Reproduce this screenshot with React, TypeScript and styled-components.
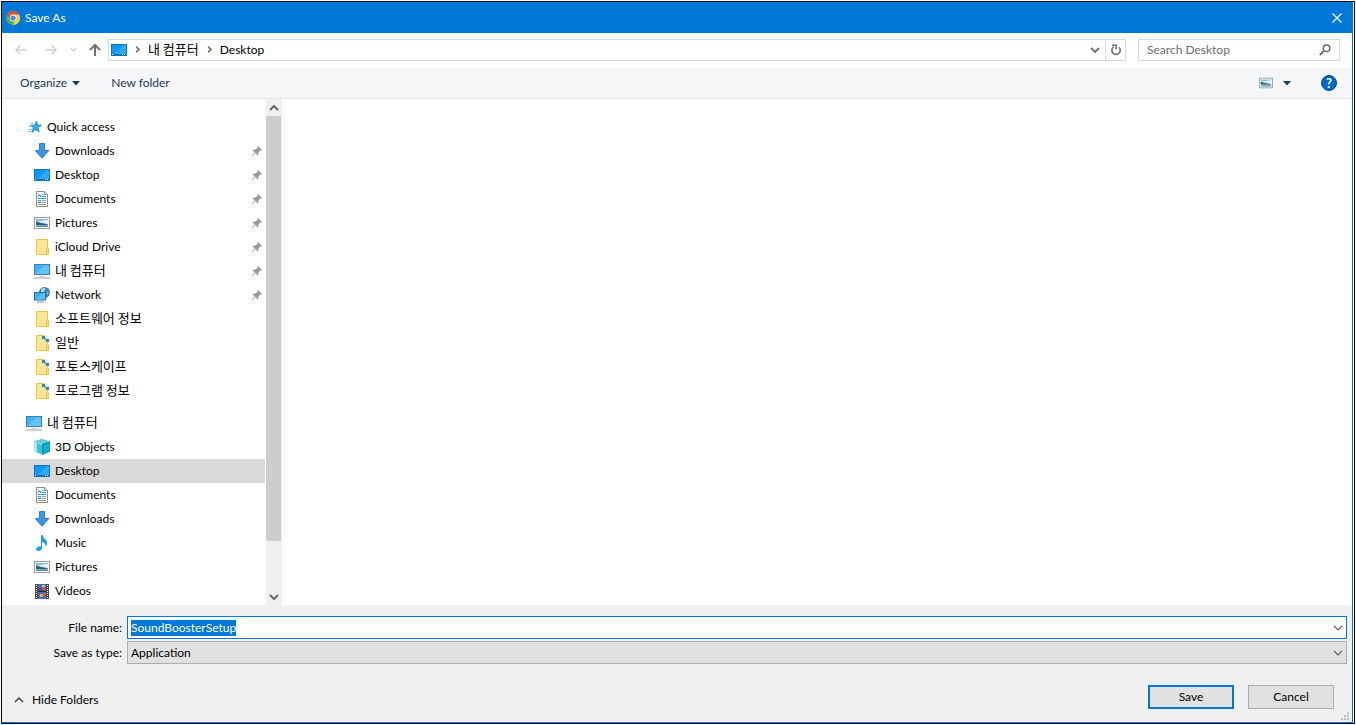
import React, { useEffect, useRef } from 'react';
import styled, { createGlobalStyle } from 'styled-components';

const GlobalStyle = createGlobalStyle`
  * { box-sizing: border-box; }
  body {
    margin: 0;
    background: #fff;
    color: #000;
    font: 12px/16px Lato, "Noto Sans CJK KR", sans-serif;
  }
  button, input, select { font: inherit; color: inherit; margin: 0; }
  svg { display: block; flex: none; }
`;

/* ---------- window ---------- */

const Page = styled.div`
  height: 100vh;
  min-height: 480px;
  padding: 1px;
  display: flex;
`;

const Frame = styled.div`
  flex: 1;
  min-width: 0;
  display: flex;
  border: 1px solid #000;
  padding-right: 1px;
`;

const Dialog = styled.main`
  flex: 1;
  min-width: 0;
  display: flex;
  flex-direction: column;
  border: solid #0078d7;
  border-width: 0 1px 1px 0;
`;

const TitleBar = styled.header`
  height: 31px;
  flex: none;
  display: flex;
  align-items: center;
  gap: 5px;
  padding: 0 10px 0 4px;
  background: #0078d7;
  color: #fff;
`;

const Title = styled.h1`
  flex: 1;
  margin: 0;
  font-size: 12px;
  font-weight: 400;
`;

const PlainButton = styled.button`
  display: flex;
  align-items: center;
  justify-content: center;
  padding: 0;
  border: 0;
  background: transparent;
`;

/* ---------- address row ---------- */

const AddressRow = styled.div`
  height: 35px;
  flex: none;
  display: flex;
  align-items: center;
  padding: 0 12px 2px;
`;

const History = styled.div`
  flex: none;
  display: grid;
  grid-template-columns: 30px 26px 18px 14px;
  justify-items: start;
  align-items: center;
  margin-right: 6px;
`;

const AddressBox = styled.div`
  flex: 1;
  min-width: 0;
  height: 22px;
  display: flex;
  align-items: center;
  border: 1px solid #d9d9d9;
  padding-left: 2px;
`;

const Crumbs = styled.nav`
  flex: 1;
  display: flex;
  align-items: center;
  gap: 7px;
`;

const Crumb = styled(PlainButton)<{ $hangul?: boolean }>`
  padding-bottom: ${p => (p.$hangul ? 2 : 0)}px;
  font-size: ${p => (p.$hangul ? 13 : 12)}px;
  font-family: ${p => (p.$hangul ? '"Noto Sans CJK KR", sans-serif' : 'inherit')};
`;

const AddressButton = styled(PlainButton)<{ $divided?: boolean }>`
  width: 20px;
  height: 20px;
  border-left: ${p => (p.$divided ? '1px solid #d9d9d9' : '0')};
`;

const SearchBox = styled.div`
  width: 202px;
  height: 22px;
  flex: none;
  display: flex;
  align-items: center;
  margin-left: 12px;
  border: 1px solid #d9d9d9;
  padding: 0 8px;
`;

const SearchInput = styled.input`
  flex: 1;
  min-width: 0;
  padding: 0;
  border: 0;
  outline: 0;
  background: transparent;
  &::placeholder { color: #6d6d6d; opacity: 1; }
`;

/* ---------- command bar ---------- */

const CommandBar = styled.div`
  height: 31px;
  flex: none;
  display: flex;
  align-items: center;
  padding: 0 15px 0 18px;
  background: #f5f6f7;
  border-bottom: 1px solid #e8e9eb;
`;

const Command = styled(PlainButton)`
  gap: 5px;
  margin-right: 31px;
  color: #1e395b;
`;

const ViewTools = styled.div`
  flex: 1;
  display: flex;
  align-items: center;
  justify-content: flex-end;
  gap: 10px;
`;

const HelpButton = styled(PlainButton)`
  margin-left: 20px;
`;

/* ---------- body ---------- */

const Body = styled.div`
  flex: 1;
  min-height: 0;
  display: flex;
`;

const Tree = styled.nav`
  width: 263px;
  flex: none;
  overflow: hidden;
  padding: 16px 0 2px;
`;

const List = styled.ul`
  list-style: none;
  margin: 0;
  padding: 0;
  & + & { margin-top: 8px; }
`;

const Row = styled.li<{ $root?: boolean; $selected?: boolean }>`
  height: 24px;
  display: flex;
  align-items: center;
  gap: 5px;
  padding: 0 3px 0 ${p => (p.$root ? 24 : 32)}px;
  background: ${p => (p.$selected ? '#d9d9d9' : 'transparent')};
`;

const RowLabel = styled.a<{ $hangul?: boolean }>`
  flex: 1;
  padding-bottom: ${p => (p.$hangul ? 2 : 0)}px;
  color: #000;
  text-decoration: none;
  white-space: nowrap;
  font-size: ${p => (p.$hangul ? 13 : 12)}px;
  font-family: ${p => (p.$hangul ? '"Noto Sans CJK KR", sans-serif' : 'inherit')};
`;

const ScrollBar = styled.div`
  width: 16px;
  flex: none;
  margin-left: 1px;
  display: flex;
  flex-direction: column;
  background: #f0f0f0;
`;

const ScrollButton = styled(PlainButton)`
  width: 15px;
  height: 17px;
  flex: none;
`;

const ScrollTrack = styled.div`
  flex: 1;
  min-height: 0;
`;

const ScrollThumb = styled.div`
  width: 15px;
  height: 90%;
  background: #cdcdcd;
`;

const FileArea = styled.section`
  flex: 1;
  margin-left: 2px;
  border-left: 1px solid #f5f5f5;
`;

/* ---------- footer ---------- */

const Footer = styled.form`
  flex: none;
  background: #f0f0f0;
  padding: 11px 5px 0 0;
`;

const Field = styled.div`
  display: flex;
  align-items: center;
  gap: 5px;
  margin-bottom: 2px;
`;

const FieldLabel = styled.label`
  width: 120px;
  flex: none;
  text-align: right;
`;

const Combo = styled.div<{ $active?: boolean }>`
  flex: 1;
  height: 23px;
  display: grid;
  grid-template-columns: 1fr 17px;
  align-items: center;
  border: 1px solid ${p => (p.$active ? '#0078d7' : '#adadad')};
  background: ${p => (p.$active ? '#fff' : '#e1e1e1')};
`;

const NameInput = styled.input`
  min-width: 0;
  height: 16px;
  padding: 0 3px;
  border: 0;
  outline: 0;
  background: transparent;
  &::selection { background: #0078d7; color: #fff; }
`;

const TypeSelect = styled.select`
  grid-area: 1 / 1 / 2 / 3;
  height: 21px;
  padding: 0 3px;
  border: 0;
  outline: 0;
  appearance: none;
  background: transparent;
`;

const SelectMark = styled.span`
  grid-area: 1 / 2 / 2 / 3;
  display: flex;
  justify-content: center;
  pointer-events: none;
`;

const Actions = styled.div`
  display: flex;
  align-items: center;
  gap: 14px;
  padding: 19px 13px 0 12px;
`;

const HideFolders = styled(PlainButton)`
  gap: 8px;
  margin-right: auto;
  padding-top: 6px;
`;

const DialogButton = styled.button<{ $primary?: boolean }>`
  width: 86px;
  height: 24px;
  padding: 0;
  background: #e1e1e1;
  border: ${p => (p.$primary ? '2px solid #0078d7' : '1px solid #adadad')};
`;

const GripRow = styled.div`
  height: 13px;
  display: flex;
  justify-content: flex-end;
  align-items: flex-start;
  padding-top: 3px;
  margin-right: -2px;
`;

/* ---------- icons ---------- */

type ChevronProps = { dir: 'up' | 'down' | 'right'; size?: number; color?: string; weight?: number };

const Chevron = ({ dir, size = 10, color = '#606060', weight = 1.5 }: ChevronProps) => {
  const d = { up: 'M1 7 5 3l4 4', down: 'M1 3l4 4 4-4', right: 'M3 1l4 4-4 4' }[dir];
  return (
    <svg width={size} height={size} viewBox="0 0 10 10" fill="none" stroke={color} strokeWidth={weight} aria-hidden="true">
      <path d={d} />
    </svg>
  );
};

const Caret = () => (
  <svg width="8" height="5" viewBox="0 0 8 5" aria-hidden="true"><path d="M0 0h8L4 4.5z" fill="#1e395b" /></svg>
);

const Arrow = ({ dir }: { dir: 'left' | 'right' | 'up' }) => {
  const d = {
    left: 'M13 7H2M6.500 2.500 2 7l4.500 4.500',
    right: 'M1 7h11M7.500 2.500 12 7l-4.500 4.500',
    up: 'M7 13V2M2 7l5-5 5 5',
  }[dir];
  const up = dir === 'up';
  return (
    <svg width="14" height="14" viewBox="0 0 14 14" fill="none" stroke={up ? '#707070' : '#d4d4d4'} strokeWidth={up ? 2 : 1.5} aria-hidden="true">
      <path d={d} />
    </svg>
  );
};

const Icon16 = ({ children }: { children: React.ReactNode }) => (
  <svg width="16" height="16" viewBox="0 0 16 16" aria-hidden="true">{children}</svg>
);

const ChromeIcon = () => (
  <svg width="14" height="14" viewBox="0 0 14 14" aria-hidden="true">
    <circle cx="7" cy="7" r="7" fill="#4caf50" />
    <path d="M7 7 .9 3.600A7 7 0 0 1 13.100 3.600z" fill="#dd4b3e" />
    <path d="M.94 3.500 4.200 8.600 7 7 7 3.600z" fill="#dd4b3e" />
    <path d="M7 3.600h6.100A7 7 0 0 1 6.600 14L9.900 8.600z" fill="#ffcd42" />
    <circle cx="7" cy="7" r="3.400" fill="#f3f3f3" />
    <circle cx="7" cy="7" r="2.600" fill="#4587f3" />
  </svg>
);

const DesktopIcon = () => (
  <Icon16>
    <rect x=".5" y="2.500" width="15" height="11" fill="#0f98fb" stroke="#0a78c0" />
    <path d="M3 12 13 3h2v9z" fill="#2ba8ff" />
    <path d="M1 12.500h14" stroke="#0c6fb8" />
    <path d="M1 12.500h1M11 12.500h1M13 12.500h1" stroke="#fff" />
  </Icon16>
);

const StarIcon = () => (
  <Icon16>
    <path d="m10.500 2 1 4 4 .2-3.300 2.300.9 4.500-3.400-2.400-3.900 2.900 1.600-4.700-2.600-2.300 3.700-.2z" fill="#35aaf0" stroke="#1a7fc4" strokeWidth=".8" />
    <path d="M4.500 4.500h3M3 7.500h2M3 10.500h3M2 12.500h3" stroke="#6cbdec" />
  </Icon16>
);

const DownloadIcon = () => (
  <Icon16>
    <path d="M5.500.5h5v7h4.300L8 15.200 1.200 7.500h4.300z" fill="#3b97e6" stroke="#2f80cc" />
  </Icon16>
);

const DocumentIcon = () => (
  <Icon16>
    <path d="M2.500.5h8l3 3v12h-11z" fill="#fff" stroke="#8c8c8c" />
    <path d="M10.500.5v3h3" fill="#e8e8e8" stroke="#8c8c8c" />
    <path d="m4 6 1.500-3L7 6" fill="none" stroke="#1c8ede" />
    <path d="M8 3.500h1.500M8 5.500h4M4 7.500h8M4 9.500h3" stroke="#2f9be6" />
    <path d="M8 9.500h4M8 11.500h4M4 13.500h8" stroke="#9b9b9b" />
    <path d="M4 11.500h3" stroke="#1c6fb4" />
  </Icon16>
);

const PictureIcon = ({ small }: { small?: boolean }) => (
  <svg width={small ? 14 : 16} height={small ? 12 : 16} viewBox={small ? '0 2 16 12' : '0 0 16 16'} aria-hidden="true">
    <rect x=".5" y="2.500" width="15" height="11" fill="#fff" stroke="#9a9a9a" />
    <path d="M2 4h12v2H2z" fill="#7dbcf0" />
    <path d="M2 6h12v3H2z" fill="#cfe8fa" />
    <path d="M9 5h5v3L9 7z" fill="#e8f5fd" />
    <path d="M2 6.500c2 0 3 1 5 1.500s4 .6 7 1.500v.5H2z" fill="#35605c" />
    <path d="M2 10h12v1H2z" fill="#7aa9cf" />
    <path d="M2 11h12v1H2z" fill="#4b88bd" />
  </svg>
);

const FolderIcon = ({ shared }: { shared?: boolean }) => (
  <Icon16>
    <path d="M2.500.5h11v9h1v6h-12z" fill="#ffe694" stroke="#e9c34f" />
    <path d="M12.500 15V10.500q0-1 1-1" fill="none" stroke="#e0b63c" />
    {shared && (
      <>
        <path d="M10 0h4v4h-2z" fill="#eef4f8" />
        <path d="M8 1h3v3H8zM12 4h3v3h-3z" fill="#2f84c9" />
        <path d="M10 3h2v2h-2z" fill="#5ba4dc" />
      </>
    )}
  </Icon16>
);

const ComputerIcon = () => (
  <Icon16>
    <rect x=".5" y="1.500" width="15" height="10" fill="#3fb2f5" stroke="#3b7ea8" />
    <path d="M1 11 11 2h4v9z" fill="#62c2fa" />
    <path d="M5 13.500h6" stroke="#c5ced6" />
    <path d="M0 15h16" stroke="#8fa0b4" />
  </Icon16>
);

const NetworkIcon = () => (
  <Icon16>
    <circle cx="10.500" cy="5.500" r="5.500" fill="#3c7ca5" />
    <path d="M7 2q3-2 5 0l-2 2 1 1-4 1z" fill="#a5d4e8" />
    <path d="m13 4 2 1-1 3-2-1z" fill="#79b3d0" />
    <rect x=".5" y="5.500" width="11" height="7.500" fill="#35aef5" stroke="#256f9f" />
    <path d="M1 12.500 9 6h2v6.500z" fill="#5dc0fa" />
    <path d="M3 15h7" stroke="#7895aa" />
    <path d="M6.500 13v2" stroke="#b4c3ce" />
  </Icon16>
);

const CubeIcon = () => (
  <Icon16>
    <path d="m8 0 8 2.500v10L8 16 0 12.500v-10z" fill="#39b9cf" />
    <path d="m8 0 8 2.500L8 5 0 2.500z" fill="#5fcfdd" />
    <path d="M0 2.500 8 5v11l-8-3.500z" fill="#a5ebf1" />
    <path d="m3 4 5 2v9l-5-2z" fill="#3fbfd4" />
    <path d="m8 5 8-2.500v10L8 16z" fill="#0d98b8" />
    <path d="m10 6 5-2v7l-5 3z" fill="#12b0cd" />
  </Icon16>
);

const MusicIcon = () => (
  <Icon16>
    <path d="M7 0h1.500q.5 3 3 4.500 2.500 2 1 6l-1 1q.5-4-3.500-4.500v6Q7.500 16 4.500 16 2 16 2 14q.5-2.500 5-2.800z" fill="#159bf0" />
  </Icon16>
);

const VideoIcon = () => (
  <Icon16>
    <path d="M1 1h14v15H1z" fill="#4a4a4a" />
    <path d="M4 1h8v15H4z" fill="#4a6cc0" />
    <path d="M4 5h4l2 2-2 1H4z" fill="#46507a" />
    <path d="M8 2h3v2H8z" fill="#dcc04a" />
    <path d="M8 4h3v3H8zM9 10h3v3H9z" fill="#c95745" />
    <path d="M6 11h3v3H6z" fill="#d9b348" />
    <path d="M4 8h8v1H4z" fill="#20243a" />
    <path d="M2.500 2v14M13.500 2v14" stroke="#e6e6e6" strokeDasharray="1 1" />
  </Icon16>
);

const PinIcon = () => (
  <svg width="10" height="10" viewBox="0 0 11 11" aria-label="Pinned">
    <path d="m6.500 0 4.500 4.500-1 .8-.8-.3L7 7.200 7.200 9 6 10 3.800 7.800.7 11 0 10.300l3.200-3.100L1 5l1-1.200 1.800.2L6 1.800l-.3-.8z" fill="#8e99a4" />
  </svg>
);

const SearchIcon = () => (
  <svg width="12" height="12" viewBox="0 0 12 12" fill="none" stroke="#6a6a6a" aria-hidden="true">
    <circle cx="7.500" cy="4.300" r="3.300" strokeWidth="1.500" />
    <path d="M5 6.800.8 11" strokeWidth="1.800" />
  </svg>
);

const RefreshIcon = () => (
  <svg width="12" height="12" viewBox="0 0 12 12" fill="none" stroke="#6e6e6e" strokeWidth="1.600" aria-hidden="true">
    <path d="M9 3.200a4.200 4.200 0 1 1-5.500-.3" />
    <path d="M2 1.200h4.200v4" />
  </svg>
);

const CloseIcon = () => (
  <svg width="10" height="10" viewBox="0 0 10 10" stroke="#fff" strokeWidth="1.200" aria-hidden="true">
    <path d="m.5.5 9 9M9.500.5l-9 9" />
  </svg>
);

const HelpMark = styled.span`
  width: 16px;
  height: 16px;
  display: block;
  border: 1px solid #004c94;
  border-radius: 50%;
  background: #0067c8;
  color: #fff;
  font-size: 13px;
  line-height: 14px;
  font-weight: 700;
  text-align: center;
`;

const GripIcon = () => (
  <svg width="8" height="8" viewBox="0 0 8 8" fill="#bdbdbd" aria-hidden="true">
    <path d="M6 0h2v2H6zM3 3h2v2H3zM6 3h2v2H6zM0 6h2v2H0zM3 6h2v2H3zM6 6h2v2H6z" />
  </svg>
);

/* ---------- data ---------- */

type Entry = { label: string; icon: React.ReactNode; pinned?: boolean; selected?: boolean };

const quickAccess: Entry[] = [
  { label: 'Downloads', icon: <DownloadIcon />, pinned: true },
  { label: 'Desktop', icon: <DesktopIcon />, pinned: true },
  { label: 'Documents', icon: <DocumentIcon />, pinned: true },
  { label: 'Pictures', icon: <PictureIcon />, pinned: true },
  { label: 'iCloud Drive', icon: <FolderIcon />, pinned: true },
  { label: '내 컴퓨터', icon: <ComputerIcon />, pinned: true },
  { label: 'Network', icon: <NetworkIcon />, pinned: true },
  { label: '소프트웨어 정보', icon: <FolderIcon /> },
  { label: '일반', icon: <FolderIcon shared /> },
  { label: '포토스케이프', icon: <FolderIcon shared /> },
  { label: '프로그램 정보', icon: <FolderIcon shared /> },
];

const computer: Entry[] = [
  { label: '3D Objects', icon: <CubeIcon /> },
  { label: 'Desktop', icon: <DesktopIcon />, selected: true },
  { label: 'Documents', icon: <DocumentIcon /> },
  { label: 'Downloads', icon: <DownloadIcon /> },
  { label: 'Music', icon: <MusicIcon /> },
  { label: 'Pictures', icon: <PictureIcon /> },
  { label: 'Videos', icon: <VideoIcon /> },
];

const isHangul = (text: string) => /[가-힣]/.test(text);

const TreeRow = ({ entry, root }: { entry: Entry; root?: boolean }) => (
  <Row $root={root} $selected={entry.selected}>
    {entry.icon}
    <RowLabel href="#" $hangul={isHangul(entry.label)}>{entry.label}</RowLabel>
    {entry.pinned && <PinIcon />}
  </Row>
);

const TreeGroup = ({ head, entries }: { head: Entry; entries: Entry[] }) => (
  <List>
    <TreeRow entry={head} root />
    {entries.map(entry => <TreeRow key={entry.label} entry={entry} />)}
  </List>
);

export default function App() {
  const nameRef = useRef<HTMLInputElement>(null);

  useEffect(() => {
    nameRef.current?.focus();
    nameRef.current?.select();
  }, []);

  return (
    <>
      <GlobalStyle />
      <Page>
        <Frame>
          <Dialog>
            <TitleBar>
              <ChromeIcon />
              <Title>Save As</Title>
              <PlainButton aria-label="Close"><CloseIcon /></PlainButton>
            </TitleBar>

            <AddressRow>
              <History>
                <PlainButton aria-label="Back"><Arrow dir="left" /></PlainButton>
                <PlainButton aria-label="Forward"><Arrow dir="right" /></PlainButton>
                <PlainButton aria-label="Recent locations"><Chevron dir="down" size={7} color="#c8c8c8" /></PlainButton>
                <PlainButton aria-label="Up"><Arrow dir="up" /></PlainButton>
              </History>
              <AddressBox>
                <Crumbs aria-label="Location">
                  <DesktopIcon />
                  <Chevron dir="right" size={7} weight={2.2} />
                  <Crumb $hangul>내 컴퓨터</Crumb>
                  <Chevron dir="right" size={7} weight={2.2} />
                  <Crumb>Desktop</Crumb>
                </Crumbs>
                <AddressButton aria-label="Previous locations"><Chevron dir="down" weight={1.8} color="#6e6e6e" /></AddressButton>
                <AddressButton $divided aria-label="Refresh"><RefreshIcon /></AddressButton>
              </AddressBox>
              <SearchBox>
                <SearchInput type="text" placeholder="Search Desktop" aria-label="Search Desktop" />
                <SearchIcon />
              </SearchBox>
            </AddressRow>

            <CommandBar>
              <Command>Organize <Caret /></Command>
              <Command>New folder</Command>
              <ViewTools>
                <PlainButton aria-label="Change view"><PictureIcon small /></PlainButton>
                <PlainButton aria-label="More view options"><Caret /></PlainButton>
                <HelpButton aria-label="Help"><HelpMark>?</HelpMark></HelpButton>
              </ViewTools>
            </CommandBar>

            <Body>
              <Tree aria-label="Folders">
                <TreeGroup head={{ label: 'Quick access', icon: <StarIcon /> }} entries={quickAccess} />
                <TreeGroup head={{ label: '내 컴퓨터', icon: <ComputerIcon /> }} entries={computer} />
              </Tree>
              <ScrollBar>
                <ScrollButton aria-label="Scroll up"><Chevron dir="up" weight={1.8} /></ScrollButton>
                <ScrollTrack><ScrollThumb /></ScrollTrack>
                <ScrollButton aria-label="Scroll down"><Chevron dir="down" weight={1.8} /></ScrollButton>
              </ScrollBar>
              <FileArea aria-label="Files" />
            </Body>

            <Footer onSubmit={e => e.preventDefault()}>
              <Field>
                <FieldLabel htmlFor="file-name">File name:</FieldLabel>
                <Combo $active>
                  <NameInput id="file-name" ref={nameRef} type="text" defaultValue="SoundBoosterSetup" spellCheck={false} />
                  <PlainButton type="button" aria-label="Show names"><Chevron dir="down" weight={1.2} /></PlainButton>
                </Combo>
              </Field>
              <Field>
                <FieldLabel htmlFor="file-type">Save as type:</FieldLabel>
                <Combo>
                  <TypeSelect id="file-type"><option>Application</option></TypeSelect>
                  <SelectMark><Chevron dir="down" weight={1.2} /></SelectMark>
                </Combo>
              </Field>
              <Actions>
                <HideFolders type="button"><Chevron dir="up" color="#404040" />Hide Folders</HideFolders>
                <DialogButton type="submit" $primary>Save</DialogButton>
                <DialogButton type="button">Cancel</DialogButton>
              </Actions>
              <GripRow><GripIcon /></GripRow>
            </Footer>
          </Dialog>
        </Frame>
      </Page>
    </>
  );
}
